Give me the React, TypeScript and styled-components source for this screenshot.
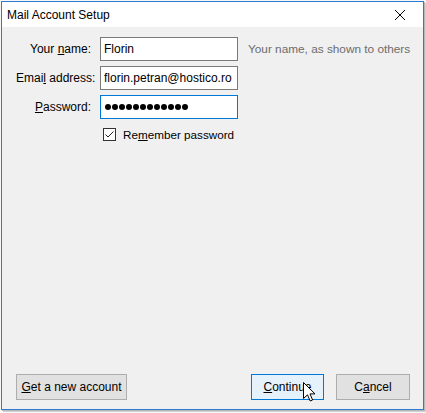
import React from 'react';
import styled, { createGlobalStyle } from 'styled-components';

const GlobalStyle = createGlobalStyle`
  html, body {
    margin: 0;
    padding: 0;
    background: #f7f7f7;
    font-family: 'Liberation Sans', Arial, sans-serif;
  }
`;

const Desktop = styled.div`
  width: 426px;
  height: 413px;
  padding: 1px 0 0 1px;
  box-sizing: border-box;
  overflow: hidden;
`;

const Window = styled.div`
  position: relative;
  width: 423px;
  height: 409px;
  box-sizing: border-box;
  border: 1px solid #2b7ad3;
  background: #f0f0f0;
  display: flex;
  flex-direction: column;
  box-shadow: 1px 1px 0 #b9b9b9, 2px 2px 0 #d0d0d0;
`;

const TitleBar = styled.div`
  height: 25px;
  background: #ffffff;
  display: flex;
  align-items: center;
  justify-content: space-between;
  padding: 0 0 0 5px;
`;

const Title = styled.span`
  font-size: 12px;
  color: #000;
`;

const CloseButton = styled.div`
  width: 44px;
  height: 25px;
  display: flex;
  align-items: center;
  justify-content: center;
  margin-right: 1px;
`;

const Body = styled.div`
  flex: 1;
  display: flex;
  flex-direction: column;
  padding: 10px 13px 9px 14px;
`;

const Form = styled.div`
  display: grid;
  grid-template-columns: 76px 138px auto;
  grid-auto-rows: 24px;
  column-gap: 8px;
  row-gap: 5px;
  align-items: center;
  font-size: 12px;
`;

const Label = styled.label`
  text-align: right;
  color: #000;
  white-space: nowrap;
  padding-right: 1px;
`;

const Field = styled.input<{ $focused?: boolean }>`
  box-sizing: border-box;
  width: 138px;
  height: 24px;
  margin: 0;
  padding: 0 3px;
  border: 1px solid ${(p) => (p.$focused ? '#0078d7' : '#7a7a7a')};
  background: #fff;
  font-family: 'Liberation Sans', Arial, sans-serif;
  font-size: 12px;
  color: #000;
  outline: none;
`;

const Dots = styled.div`
  box-sizing: border-box;
  width: 138px;
  height: 24px;
  border: 1px solid #0078d7;
  background: #fff;
  display: flex;
  align-items: center;
  gap: 1px;
  padding-left: 4px;
`;

const Dot = styled.span`
  width: 6px;
  height: 6px;
  border-radius: 50%;
  background: #000;
`;

const Hint = styled.span`
  color: #6d6d6d;
  font-size: 11.8px;
  padding-left: 2px;
  white-space: nowrap;
`;

const CheckRow = styled.label`
  display: flex;
  align-items: center;
  gap: 7px;
  margin: 9px 0 0 87px;
  font-size: 11.7px;
  color: #000;
`;

const Box = styled.span`
  width: 13px;
  height: 13px;
  box-sizing: border-box;
  border: 1px solid #333;
  background: #fff;
  display: flex;
  align-items: center;
  justify-content: center;
`;

const Spacer = styled.div`
  flex: 1;
`;

const Footer = styled.div`
  display: flex;
  align-items: center;
  gap: 12px;
`;

const Button = styled.button<{ $primary?: boolean; $width: number }>`
  position: relative;
  box-sizing: border-box;
  width: ${(p) => p.$width}px;
  height: 26px;
  padding: 0;
  border: 1px solid ${(p) => (p.$primary ? '#0078d7' : '#adadad')};
  background: ${(p) => (p.$primary ? '#e5f1fb' : '#e1e1e1')};
  font-family: 'Liberation Sans', Arial, sans-serif;
  font-size: 12px;
  color: #000;
`;

// mouse pointer hovering over the default button
const Cursor = styled.svg`
  position: absolute;
  left: 51px;
  top: 7px;
  pointer-events: none;
`;

export default function App(): React.ReactElement {
  return (
    <>
      <GlobalStyle />
      <Desktop>
        <Window>
          <TitleBar>
            <Title>Mail Account Setup</Title>
            <CloseButton>
              <svg width="12" height="12" viewBox="0 0 12 12">
                <path d="M1 1 L11 11 M11 1 L1 11" stroke="#000" strokeWidth="1" />
              </svg>
            </CloseButton>
          </TitleBar>
          <Body>
            <Form>
              <Label>
                Your <u>n</u>ame:
              </Label>
              <Field readOnly value="Florin" />
              <Hint>Your name, as shown to others</Hint>

              <Label>
                Emai<u>l</u> address:
              </Label>
              <Field readOnly value="florin.petran@hostico.ro" />
              <span />

              <Label>
                <u>P</u>assword:
              </Label>
              <Dots>
                {Array.from({ length: 12 }).map((_, i) => (
                  <Dot key={i} />
                ))}
              </Dots>
              <span />
            </Form>

            <CheckRow>
              <Box>
                <svg width="11" height="11" viewBox="0 0 11 11">
                  <path d="M1.5 5.5 L4 8 L9.5 2.5" stroke="#222" strokeWidth="1" fill="none" />
                </svg>
              </Box>
              <span>
                Re<u>m</u>ember password
              </span>
            </CheckRow>

            <Spacer />

            <Footer>
              <Button $width={111}>
                <u>G</u>et a new account
              </Button>
              <Spacer />
              <Button $primary $width={73}>
                <u>C</u>ontinue
                <Cursor width="13" height="20" viewBox="0 0 13 20">
                  <path
                    d="M0.5 0.5 L0.5 16.5 L4.5 12.8 L7.2 19 L9.6 18 L7 11.9 L12 11.9 Z"
                    fill="#fff"
                    stroke="#000"
                    strokeWidth="1"
                    strokeLinejoin="miter"
                  />
                </Cursor>
              </Button>
              <Button $width={74}>
                C<u>a</u>ncel
              </Button>
            </Footer>
          </Body>
        </Window>
      </Desktop>
    </>
  );
}
